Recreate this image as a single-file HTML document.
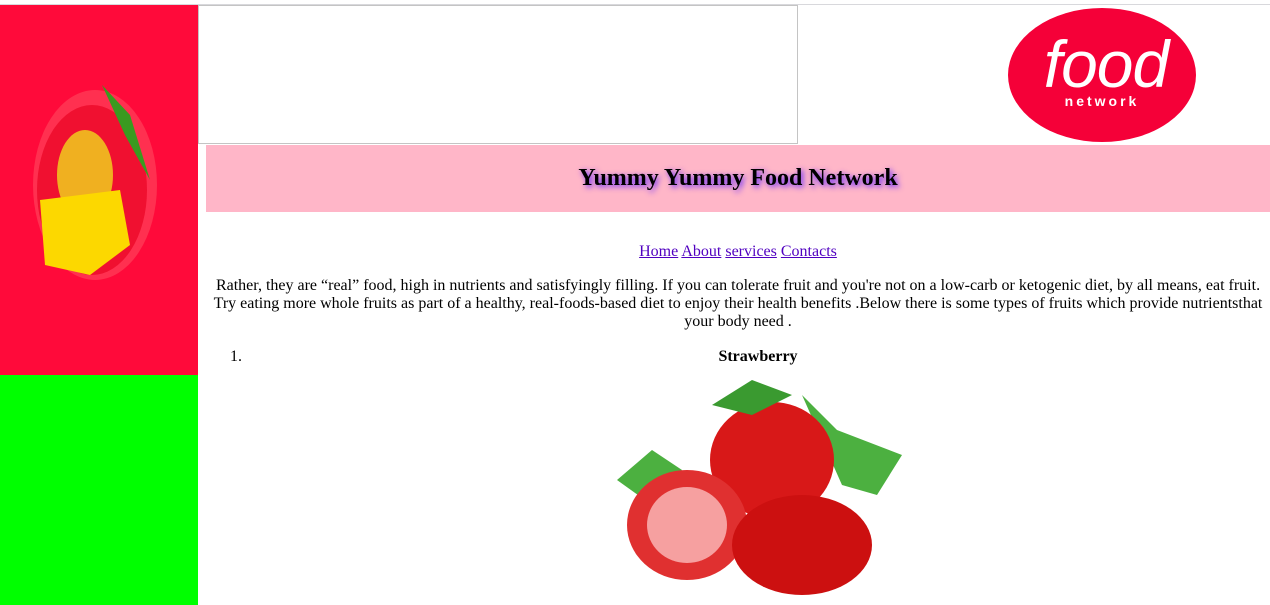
<!DOCTYPE html>
<html><head><style>
body{margin:0;width:1270px;height:605px;overflow:hidden;background:#fff;font-family:"Liberation Serif",serif;font-size:16px;position:relative}
.a{position:absolute}
a{color:#5000c0;text-decoration:underline}
</style></head><body>
<div class="a" style="left:0;top:4px;width:1270px;height:1px;background:#d8d8dc"></div>
<div class="a" style="left:0;top:5px;width:198px;height:370px;background:#ff0a3a">
<svg width="198" height="370">
<ellipse cx="95" cy="180" rx="62" ry="95" fill="#ff3050"/>
<ellipse cx="92" cy="185" rx="55" ry="85" fill="#f01030"/>
<ellipse cx="85" cy="170" rx="28" ry="45" fill="#f0b020"/>
<path d="M40 195 L120 185 L130 240 L90 270 L45 260 Z" fill="#fcd800"/>
<path d="M102 80 L130 110 L150 175 L125 130 Z" fill="#3a9a20"/>
</svg></div>
<div class="a" style="left:0;top:375px;width:198px;height:230px;background:#00ff00"></div>
<div class="a" style="left:198px;top:5px;width:598px;height:137px;border:1px solid #c4c4c4"></div>
<svg class="a" style="left:1006px;top:7px" width="192" height="136">
<ellipse cx="96" cy="68" rx="94" ry="67" fill="#f50038"/>
<text x="100" y="80" text-anchor="middle" fill="#fff" font-family="Liberation Sans,sans-serif" font-style="italic" font-size="66" letter-spacing="-1">food</text>
<text x="96" y="99" text-anchor="middle" fill="#fff" font-family="Liberation Sans,sans-serif" font-size="14" font-weight="bold" letter-spacing="3">network</text>
</svg>
<div class="a" style="left:206px;top:145px;width:1064px;height:67px;background:#ffb6c8;text-align:center;line-height:67px;font-weight:bold;font-size:24px;text-shadow:2px 2px 6px #6020ff">Yummy Yummy Food Network</div>
<div class="a" style="left:206px;top:243px;width:1064px;text-align:center"><a>Home</a> <a>About</a> <a>services</a> <a>Contacts</a></div>
<div class="a" style="left:206px;top:277px;width:1064px;text-align:center;line-height:18px">Rather, they are “real” food, high in nutrients and satisfyingly filling. If you can tolerate fruit and you're not on a low-carb or ketogenic diet, by all means, eat fruit. Try eating more whole fruits as part of a healthy, real-foods-based diet to enjoy their health benefits .Below there is some types of fruits which provide nutrientsthat your body need .</div>
<div class="a" style="left:230px;top:348px">1.</div>
<div class="a" style="left:246px;top:348px;width:1024px;text-align:center;font-weight:bold">Strawberry</div>
<svg class="a" style="left:612px;top:375px" width="295" height="225">
<path d="M190 20 L225 55 L290 80 L265 120 L230 110 Z" fill="#4cb040"/>
<path d="M5 105 L40 75 L70 95 L40 130 Z" fill="#4cb040"/>
<ellipse cx="160" cy="85" rx="62" ry="58" fill="#d81818"/>
<ellipse cx="75" cy="150" rx="60" ry="55" fill="#e03030"/>
<ellipse cx="75" cy="150" rx="40" ry="38" fill="#f6a0a0"/>
<ellipse cx="190" cy="170" rx="70" ry="50" fill="#cc1010"/>
<path d="M100 30 L140 5 L180 20 L140 40 Z" fill="#3a9a30"/>
</svg>
</body></html>
